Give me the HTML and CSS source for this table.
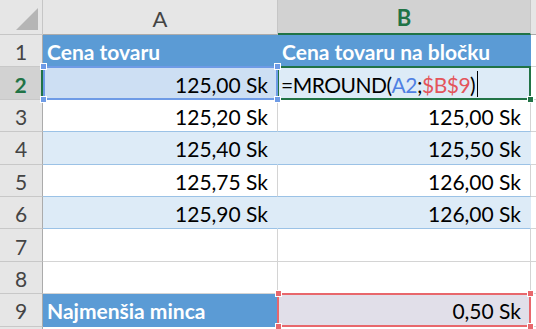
FILE: index.html
```html
<!DOCTYPE html>
<html lang="sk">
<head>
    <meta charset="UTF-8">
    <meta name="viewport" content="width=device-width, initial-scale=1.0">
    <title>MROUND</title>
    <link rel="stylesheet" href="styles.css">
</head>
<body>
    <div class="sheet">
        <!-- hlavičky stĺpcov -->
        <div class="hdr corner"><span class="tri"></span></div>
        <div class="hdr col">A</div>
        <div class="hdr col sel-col">B</div>
        <div class="hdr col"></div>

        <div class="hdr row">1</div>
        <div class="cell head">Cena tovaru</div>
        <div class="cell head">Cena tovaru na bločku</div>
        <div class="cell blank"></div>

        <div class="hdr row sel-row">2</div>
        <div class="cell band num ref-a">125,00 Sk
            <span class="h tl"></span><span class="h tr"></span><span class="h bl"></span><span class="h br"></span>
        </div>
        <div class="cell band active"><span class="formula">=MROUND(<span class="r-blue">A2</span>;<span class="r-red">$B$9</span>)</span><span class="caret"></span>
            <span class="h br"></span>
        </div>
        <div class="cell blank"></div>

        <div class="hdr row">3</div>
        <div class="cell plain num">125,20 Sk</div>
        <div class="cell plain num">125,00 Sk</div>
        <div class="cell blank"></div>

        <div class="hdr row">4</div>
        <div class="cell band num">125,40 Sk</div>
        <div class="cell band num">125,50 Sk</div>
        <div class="cell blank"></div>

        <div class="hdr row">5</div>
        <div class="cell plain num">125,75 Sk</div>
        <div class="cell plain num">126,00 Sk</div>
        <div class="cell blank"></div>

        <div class="hdr row">6</div>
        <div class="cell band num">125,90 Sk</div>
        <div class="cell band num">126,00 Sk</div>
        <div class="cell blank"></div>

        <div class="hdr row">7</div>
        <div class="cell blank"></div>
        <div class="cell blank"></div>
        <div class="cell blank"></div>

        <div class="hdr row">8</div>
        <div class="cell blank"></div>
        <div class="cell blank"></div>
        <div class="cell blank"></div>

        <div class="hdr row">9</div>
        <div class="cell head">Najmenšia minca</div>
        <div class="cell num ref-b">0,50 Sk
            <span class="h tl"></span><span class="h tr"></span><span class="h bl"></span><span class="h br"></span>
        </div>
        <div class="cell blank"></div>

        <div class="hdr row"></div>
        <div class="cell blank"></div>
        <div class="cell blank"></div>
        <div class="cell blank"></div>
    </div>
</body>
</html>
```
FILE: styles.css
```css
html, body {
    margin: 0;
    overflow: hidden;
}
body {
    background: #ffffff;
    font-family: Lato, "Liberation Sans", sans-serif;
}

.sheet {
    display: grid;
    width: 536px;
    height: 329px;
    overflow: hidden;
    grid-template-columns: 43px 235px 253px 1fr;
    grid-template-rows: 35px repeat(10, 32.4px);
    font-size: 21px;
    color: #000;
}

/* hlavičky */
.hdr {
    background: #e6e6e6;
    color: #444;
    border-right: 1px solid #c6c6c6;
    border-bottom: 1px solid #c6c6c6;
    display: flex;
    align-items: center;
    justify-content: center;
    box-sizing: border-box;
}
.hdr.col {
    font-size: 22px;
    padding-top: 2px;
    border-bottom-color: #ababab;
}
.hdr.row {
    border-right-color: #ababab;
    border-bottom-color: #c8c8c8;
    padding-top: 2px;
}
.hdr.sel-col {
    background: #d2d2d2;
    color: #217346;
    font-weight: bold;
    border-bottom: 2px solid #217346;
}
.hdr.sel-row {
    background: #d2d2d2;
    color: #217346;
    font-weight: bold;
    border-right: 2px solid #217346;
}
.corner {
    position: relative;
}
.tri {
    position: absolute;
    right: 4px;
    bottom: 4px;
    width: 0;
    height: 0;
    border-left: 22px solid transparent;
    border-bottom: 22px solid #b5b5b5;
}

/* bunky */
.cell {
    box-sizing: border-box;
    border-right: 1px solid #d4d4d4;
    border-bottom: 1px solid #d4d4d4;
    padding: 2px 4px 0;
    display: flex;
    align-items: center;
    white-space: nowrap;
    position: relative;
}
.num {
    justify-content: flex-end;
    padding-right: 9px;
}
.head {
    background: #5b9bd5;
    color: #fff;
    font-weight: bold;
    border-right-color: #5b9bd5;
    border-bottom-color: #5b9bd5;
}
.band {
    background: #ddebf7;
    border-right-color: #ddebf7;
    border-bottom-color: #9bc2e6;
}
.plain {
    border-bottom-color: #9bc2e6;
}

/* úchyty v rohoch výberu */
.h {
    position: absolute;
    width: 5px;
    height: 5px;
    z-index: 2;
    border: 1px solid #fff;
}
.tl { left: -3px; top: -4px; }
.tr { right: -4px; top: -4px; }
.bl { left: -3px; bottom: -4px; }
.br { right: -4px; bottom: -4px; }

/* odkaz A2 */
.ref-a {
    background: #cddff3;
    z-index: 1;
}
.ref-a::after {
    content: "";
    position: absolute;
    left: 0;
    top: -1px;
    right: -1px;
    bottom: -1px;
    border: 2px solid #6e9be6;
}
.ref-a .h { background: #6e9be6; }

/* aktívna bunka B2 */
.active {
    padding-left: 3px;
}
.active::after {
    content: "";
    position: absolute;
    left: -1px;
    top: -1px;
    right: -1px;
    bottom: -1px;
    border: 2px solid #217346;
}
.active .h {
    background: #217346;
    right: -4px;
    bottom: -4px;
}
.formula {
    letter-spacing: -0.5px;
}
.r-blue { color: #4f80e3; }
.r-red { color: #e4555b; }
.caret {
    display: inline-block;
    width: 1px;
    height: 26px;
    background: #000;
    margin-left: 2px;
}

/* odkaz B9 */
.ref-b {
    background: #e1dfe9;
    z-index: 1;
}
.ref-b::after {
    content: "";
    position: absolute;
    left: -1px;
    top: -1px;
    right: -1px;
    bottom: -1px;
    border: 2px solid #e8676c;
}
.ref-b .h { background: #e8676c; }
```
